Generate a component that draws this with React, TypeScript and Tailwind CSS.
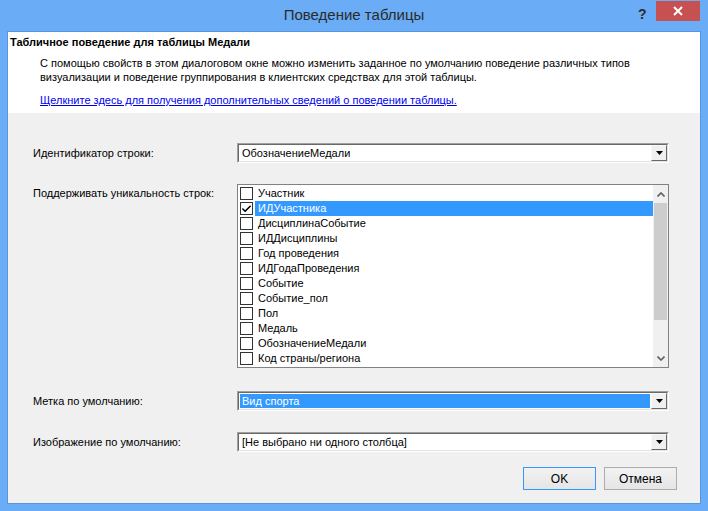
import { Check } from 'lucide-react';

const items = [
  'Участник',
  'ИДУчастника',
  'ДисциплинаСобытие',
  'ИДДисциплины',
  'Год проведения',
  'ИДГодаПроведения',
  'Событие',
  'Событие_пол',
  'Пол',
  'Медаль',
  'ОбозначениеМедали',
  'Код страны/региона',
];

function DropArrow() {
  return (
    <div className="flex h-full w-[16px] items-center justify-center border border-t-[#f8f8f8] border-l-[#f8f8f8] border-r-[#696969] border-b-[#696969] bg-[#f0f0f0]">
      <svg width="7" height="4" viewBox="0 0 7 4">
        <path d="M0 0h7L3.5 4z" fill="#000" />
      </svg>
    </div>
  );
}

function Combo({ value, selected }: { value: string; selected?: boolean }) {
  return (
    <div className="h-[20px] w-[432px] border border-t-[#a0a0a0] border-l-[#a0a0a0] border-r-[#ffffff] border-b-[#ffffff]">
      <div className="flex h-full border border-t-[#696969] border-l-[#696969] border-r-[#e3e3e3] border-b-[#e3e3e3] bg-white">
        <div className="flex flex-1 items-center p-px">
          <div
            className={
              selected
                ? 'flex h-full flex-1 items-center bg-[#3399ff] pl-[2px] text-white'
                : 'flex h-full flex-1 items-center pl-[2px] text-black'
            }
          >
            {value}
          </div>
        </div>
        <DropArrow />
      </div>
    </div>
  );
}

function CheckList() {
  return (
    <div className="flex h-[184px] w-[432px] border border-[#828282] bg-white">
      <div className="flex flex-1 flex-col pt-[1px]">
        {items.map((item, i) => (
          <div key={item} className="flex h-[15px] items-center">
            <div className="ml-[2px] flex h-[13px] w-[13px] items-center justify-center border border-[#333333] bg-white">
              {i === 1 && <Check size={12} strokeWidth={3.5} color="#000" />}
            </div>
            <div
              className={
                i === 1
                  ? 'ml-[2px] flex h-full flex-1 items-center bg-[#3399ff] pl-[3px] text-white'
                  : 'ml-[2px] flex h-full flex-1 items-center pl-[3px] text-black'
              }
            >
              {item}
            </div>
          </div>
        ))}
      </div>
      <div className="flex w-[15px] flex-col bg-[#f0f0f0]">
        <div className="flex h-[18px] items-center justify-center">
          <svg width="8" height="5" viewBox="0 0 8 5">
            <path d="M0.5 4.5L4 1l3.5 3.5" stroke="#606060" strokeWidth="1.6" fill="none" />
          </svg>
        </div>
        <div className="mx-px h-[117px] bg-[#cdcdcd]" />
        <div className="flex-1" />
        <div className="flex h-[18px] items-center justify-center">
          <svg width="8" height="5" viewBox="0 0 8 5">
            <path d="M0.5 0.5L4 4l3.5-3.5" stroke="#606060" strokeWidth="1.6" fill="none" />
          </svg>
        </div>
      </div>
    </div>
  );
}

export default function App() {
  return (
    <div className="flex h-[511px] w-[708px] flex-col bg-[#6aacf5] font-['Liberation_Sans',Arial,sans-serif] text-[11px]">
      <div className="relative flex h-[31px] shrink-0 items-center justify-center">
        <span className="pb-[1px] text-[15px] text-[#2b2b2b]">Поведение таблицы</span>
        <span className="absolute left-[638px] top-[4px] text-[14px] font-bold text-[#2b2b2b]">?</span>
        <div className="absolute right-[8px] top-[1px] flex h-[20px] w-[44px] items-center justify-center bg-[#c75050]">
          <svg width="10" height="10" viewBox="0 0 10 10">
            <path d="M1 1l8 8M9 1l-8 8" stroke="#fff" strokeWidth="2" />
          </svg>
        </div>
      </div>
      <div className="mx-[7px] mb-[7px] flex flex-1 flex-col border border-[#5596e0] bg-[#f0f0f0]">
        <div className="flex h-[81px] flex-col bg-white">
          <div className="pl-[2px] pt-[2px] text-[11px] font-bold leading-[16px] text-black">
            Табличное поведение для таблицы Медали
          </div>
          <div className="mt-[6px] pl-[32px] pr-[20px] text-[11px] leading-[14px] text-black">
            С помощью свойств в этом диалоговом окне можно изменить заданное по умолчанию поведение различных типов
            визуализации и поведение группирования в клиентских средствах для этой таблицы.
          </div>
          <div className="mt-[9px] pl-[32px] text-[11px] leading-[14px] text-[#0000ee] underline">
            Щелкните здесь для получения дополнительных сведений о поведении таблицы.
          </div>
        </div>
        <div className="grid grid-cols-[204px_432px] items-start pl-[25px] pt-[30px] text-black">
          <div className="flex h-[20px] items-center">Идентификатор строки:</div>
          <Combo value="ОбозначениеМедали" />
          <div className="col-span-2 h-[21px]" />
          <div className="pt-[2px] leading-[14px]">Поддерживать уникальность строк:</div>
          <CheckList />
          <div className="col-span-2 h-[23px]" />
          <div className="flex h-[20px] items-center">Метка по умолчанию:</div>
          <Combo value="Вид спорта" selected />
          <div className="col-span-2 h-[21px]" />
          <div className="flex h-[20px] items-center">Изображение по умолчанию:</div>
          <Combo value="[Не выбрано ни одного столбца]" />
        </div>
        <div className="flex justify-end gap-[8px] pr-[23px] pt-[15px]">
          <button className="h-[23px] w-[73px] border border-[#3399ff] bg-gradient-to-b from-[#f2f2f2] to-[#e5e5e5] text-[12px] text-black">
            OK
          </button>
          <button className="h-[23px] w-[73px] border border-[#acacac] bg-gradient-to-b from-[#f2f2f2] to-[#e5e5e5] text-[12px] text-black">
            Отмена
          </button>
        </div>
      </div>
    </div>
  );
}
